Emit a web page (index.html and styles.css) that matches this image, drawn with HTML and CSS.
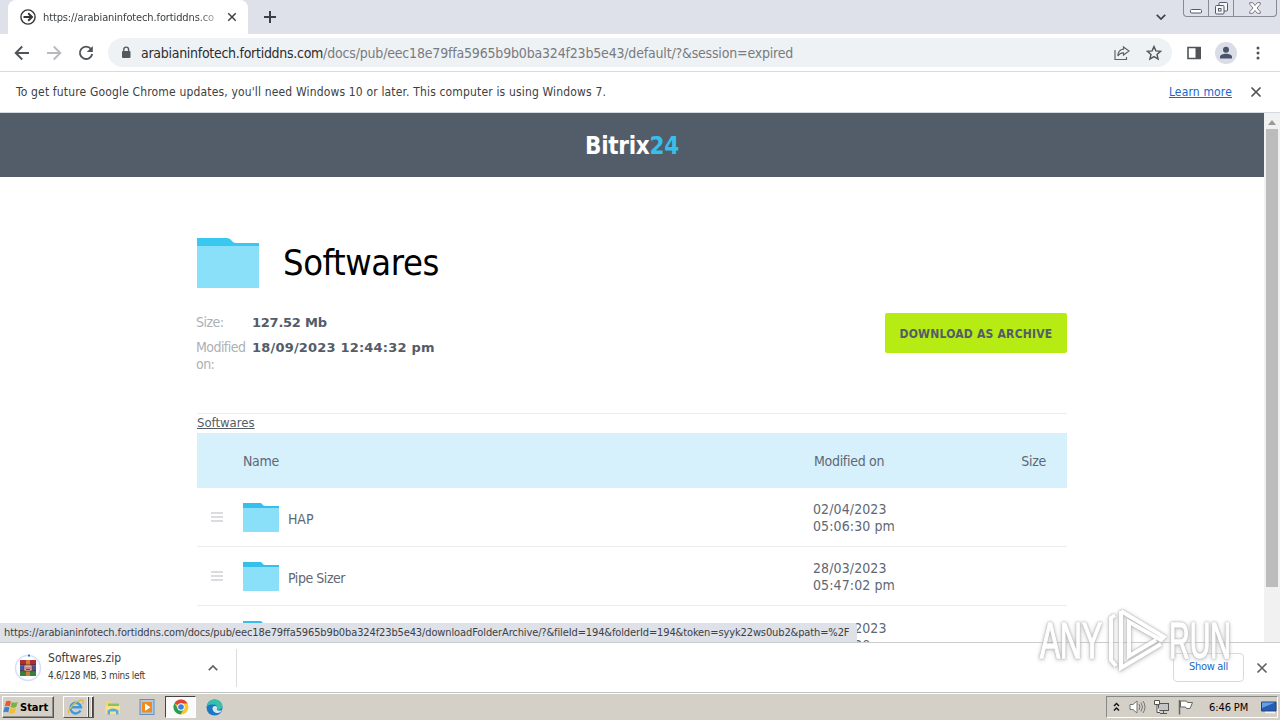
FILE: index.html
```html
<!DOCTYPE html>
<html lang="en">
<head>
  <meta charset="UTF-8">
  <meta name="viewport" content="width=device-width, initial-scale=1.0">
  <title>Softwares - Bitrix24</title>
  <link rel="stylesheet" href="styles.css">
</head>
<body>
  <svg width="0" height="0" class="defs">
    <symbol id="folder" viewBox="0 0 62 50">
      <path d="M0 0h30q3 0 5 3 1 2 4 2h23v5H0z" fill="#3ac8f1"/>
      <path d="M0 8h62v42H0z" fill="#8be0f9"/>
    </symbol>
    <symbol id="folder-small" viewBox="0 0 36 29">
      <path d="M0 0h18l3 3h15v3H0z" fill="#35bfea"/>
      <path d="M0 5h36v24H0z" fill="#8be0f9"/>
    </symbol>
    <symbol id="close" viewBox="0 0 12 12">
      <path d="M1.500 1.500l9 9M10.500 1.500l-9 9" fill="none" stroke="currentColor" stroke-width="1.700"/>
    </symbol>
  </svg>

  <!-- tab strip -->
  <div class="tabstrip">
    <div class="tab">
      <svg class="favicon" width="16" height="16" viewBox="0 0 16 16" fill="none" stroke="#333639"><circle cx="8" cy="8" r="7.100" stroke-width="1.400"/><path d="M3.500 8H12M8.200 4.200L12 8l-3.800 3.800" stroke-width="2"/></svg>
      <span class="tab-title">https://arabianinfotech.fortiddns.co</span>
      <svg class="tab-close" width="10" height="10"><use href="#close"/></svg>
    </div>
    <svg class="new-tab" width="12" height="12" viewBox="0 0 12 12"><path d="M6 0v12M0 6h12" stroke="#3c4043" stroke-width="2"/></svg>
    <svg class="tab-search" width="10" height="6" viewBox="0 0 10 6"><path d="M.8.8L5 5 9.200.8" fill="none" stroke="#3c4043" stroke-width="1.700"/></svg>
    <div class="win-buttons">
      <span><svg width="12" height="14" viewBox="0 0 12 14"><rect x=".5" y="8.500" width="11" height="3.500" rx="1" fill="#fff" stroke="#555b66"/></svg></span>
      <span><svg width="13" height="14" viewBox="0 0 13 14" fill="#f5f6f9" stroke="#555b66"><rect x="4" y="1.500" width="8.500" height="8.500" rx="1"/><rect x=".5" y="4.500" width="8.500" height="8.500" rx="1"/><rect x="3.500" y="7.500" width="2.500" height="2.500"/></svg></span>
      <span><svg width="12" height="12" viewBox="0 0 12 12"><path d="M.7.7h3L6 3.500 8.300.7h3v1.500L8 6l3.300 3.800v1.500h-3L6 8.500l-2.300 2.800h-3V9.800L4 6 .7 2.200z" fill="#fff" stroke="#666c78" stroke-width=".9"/></svg></span>
    </div>
  </div>

  <!-- toolbar -->
  <div class="toolbar">
    <svg class="nav" width="16" height="16" viewBox="0 0 16 16"><path d="M15 8H2M8.200 1.500L1.700 8l6.500 6.500" fill="none" stroke="#505458" stroke-width="1.900"/></svg>
    <svg class="nav" width="16" height="16" viewBox="0 0 16 16"><path d="M1 8h13M7.800 1.500L14.300 8l-6.500 6.500" fill="none" stroke="#b8babd" stroke-width="1.900"/></svg>
    <svg class="nav" width="16" height="16" viewBox="0 0 16 16"><path d="M13 4A6.200 6.200 0 1 0 14.200 9" fill="none" stroke="#505458" stroke-width="1.900"/><path d="M14.800 1v6h-6z" fill="#505458"/></svg>
    <div class="omnibox">
      <svg width="10" height="13" viewBox="0 0 10 13"><rect x="1" y="5" width="8.500" height="7" rx="1" fill="#55595e"/><path d="M2.800 5.500V3.500a2.400 2.400 0 0 1 4.800 0v2" fill="none" stroke="#55595e" stroke-width="1.400"/></svg>
      <span class="url"><b>arabianinfotech.fortiddns.com</b>/docs/pub/eec18e79ffa5965b9b0ba324f23b5e43/default/?&amp;session=expired</span>
      <svg class="share" width="16" height="16" viewBox="0 0 16 16" fill="none" stroke="#5f6368" stroke-width="1.200"><path d="M1 5v9.500h11.500V12"/><path d="M9.500 2l5.500 4-5.500 4V7.800C6.500 7.600 5 9 3.800 11 4 7 6 4.600 9.500 4.200z"/></svg>
      <svg width="16" height="16" viewBox="0 0 16 16"><path d="M8 1.500l1.900 4.400 4.700.4-3.600 3.100 1.100 4.600L8 11.600 3.900 14 5 9.400 1.400 6.300l4.700-.4z" fill="none" stroke="#505458" stroke-width="1.400"/></svg>
    </div>
    <svg class="panel" width="14" height="14" viewBox="0 0 14 14"><path d="M1 1.500h12v11H1z" fill="none" stroke="#505458" stroke-width="1.600"/><path d="M8.500 1H14v12H8.500z" fill="#505458"/></svg>
    <svg class="avatar" width="22" height="22" viewBox="0 0 22 22"><circle cx="11" cy="11" r="11" fill="#dadde5"/><circle cx="11" cy="7.800" r="3" fill="#47546e"/><path d="M5 16.500v-1.700c0-2 3.200-3 6-3s6 1 6 3v1.700z" fill="#47546e"/></svg>
    <svg width="4" height="14" viewBox="0 0 4 14" fill="#505458"><circle cx="2" cy="2" r="1.500"/><circle cx="2" cy="7" r="1.500"/><circle cx="2" cy="12" r="1.500"/></svg>
  </div>

  <div class="infobar">
    <span>To get future Google Chrome updates, you'll need Windows 10 or later. This computer is using Windows 7.</span>
    <a href="#">Learn more</a>
    <svg width="12" height="12"><use href="#close"/></svg>
  </div>

  <!-- page -->
  <div class="viewport">
    <div class="page">
      <header class="header">Bitrix<span>24</span></header>
      <main class="content">
        <div class="title">
          <svg width="62" height="50"><use href="#folder"/></svg>
          <h1>Softwares</h1>
        </div>
        <div class="info">
          <dl>
            <dt>Size:</dt><dd class="size">127.52 Mb</dd>
            <dt>Modified on:</dt><dd>18/09/2023 12:44:32 pm</dd>
          </dl>
          <a class="download" href="#">DOWNLOAD AS ARCHIVE</a>
        </div>
        <div class="crumbs"><a href="#">Softwares</a></div>
        <div class="row head">
          <span></span><span>Name</span><span>Modified on</span><span class="col-size">Size</span>
        </div>
        <div class="row">
          <i class="grip"></i>
          <div class="name"><svg width="36" height="29"><use href="#folder-small"/></svg><span class="hap">HAP</span></div>
          <div class="date">02/04/2023<br>05:06:30 pm</div>
        </div>
        <div class="row">
          <i class="grip"></i>
          <div class="name"><svg width="36" height="29"><use href="#folder-small"/></svg><span>Pipe Sizer</span></div>
          <div class="date">28/03/2023<br>05:47:02 pm</div>
        </div>
        <div class="row last">
          <i class="grip"></i>
          <div class="name"><svg width="36" height="29"><use href="#folder-small"/></svg></div>
          <div class="date">27/03/2023<br>05:43:20 pm</div>
        </div>
      </main>
    </div>
    <div class="scrollbar"><i class="up"></i><i class="thumb"></i></div>
    <div class="status">https://arabianinfotech.fortiddns.com/docs/pub/eec18e79ffa5965b9b0ba324f23b5e43/downloadFolderArchive/?&amp;fileId=194&amp;folderId=194&amp;token=syyk22ws0ub2&amp;path=%2F</div>
  </div>

  <!-- download shelf -->
  <div class="shelf">
    <svg width="28" height="28" viewBox="0 0 28 28">
      <circle cx="14" cy="14" r="12.500" fill="none" stroke="#d3dff6" stroke-width="1.500"/>
      <path d="M14 1.500h2" stroke="#3b78c8" stroke-width="2"/>
      <path d="M6 6h16v5H6z" fill="#b3283a"/><path d="M6 11.500h16v5H6z" fill="#3858a8"/><path d="M6 17h16v5H6z" fill="#35803e"/>
      <path d="M6 11h16M6 16.700h16" stroke="#302b35"/>
      <path d="M12 6h4v16h-4z" fill="#c9803a"/><path d="M10 11h8v6h-8z" fill="#e9ddd3" stroke="#7c3b33"/><path d="M12 12.500v3h4v-3M14 12.500v3" fill="none" stroke="#b3283a"/>
    </svg>
    <div class="file"><div>Softwares.zip</div><small>4.6/128 MB, 3 mins left</small></div>
    <svg class="chevron" width="10" height="6" viewBox="0 0 10 6"><path d="M.8 5.200L5 1l4.200 4.200" fill="none" stroke="#5f6368" stroke-width="1.700"/></svg>
    <a class="show-all" href="#">Show all</a>
    <svg class="shelf-close" width="12" height="12"><use href="#close"/></svg>
  </div>

  <!-- windows taskbar -->
  <div class="taskbar">
    <div class="start">
      <svg width="16" height="16" viewBox="0 0 16 16"><path d="M3 2.500q2.500-1.500 5 0L6.800 7.500q-2.400-1.400-5 0z" fill="#e8592b"/><path d="M8.800 3q2.500 1.300 6 0l-1.600 5q-2.800 1.300-5.600 0z" fill="#7bb342"/><path d="M1.500 8.500q2.600-1.400 5 0l-1.300 5q-2.400-1.400-5 0z" fill="#3c84d0"/><path d="M7.400 9q2.600 1.300 5.500 0l-1.400 5q-2.700 1.300-5.400 0z" fill="#f4bf2c"/></svg>
      <span>Start</span>
    </div>
    <div class="ie"><svg width="18" height="18" viewBox="0 0 18 18"><path d="M13.500 12.500A5.300 5.300 0 1 1 14 9.300H5" fill="none" stroke="#3c9be0" stroke-width="2.400"/><path d="M2 15.500C-1 13 8 3 14.500 2c2.500-.2 2 2.500.8 4" fill="none" stroke="#e6b93c" stroke-width="1.300"/></svg><i></i><i></i></div>
    <svg class="task" width="18" height="18" viewBox="0 0 18 18"><path d="M2 3h5l1 2h7v10H2z" fill="#f0d683"/><path d="M4 5.500h11v2.500H4z" fill="#8ebf62"/><path d="M1.500 8h14.500v8H1.500z" fill="#f7e28c"/><path d="M3.500 16.500v-4q5.500-4 11 0v4H12v-3H6v3z" fill="#5caade"/></svg>
    <svg class="task" width="18" height="18" viewBox="0 0 18 18"><rect x="2" y="1.500" width="14" height="15" fill="#a7cbea" stroke="#5d91c6"/><rect x="4" y="4" width="10" height="10.500" fill="#f18a1c"/><path d="M7 5.500l5.500 3.700L7 13z" fill="#fff"/></svg>
    <div class="active"><svg width="16" height="16" viewBox="0 0 16 16"><circle cx="8" cy="8" r="7.500" fill="#f9c72e"/><path d="M8 8L1.500 4.200A7.500 7.500 0 0 1 14.500 4.500H8z" fill="#dc4437"/><path d="M1.500 4.200A7.500 7.500 0 0 0 7.500 15.500L11 9.800 8 8 5 9.800z" fill="#2a9c55"/><circle cx="8" cy="8" r="3.700" fill="#fff"/><circle cx="8" cy="8" r="2.800" fill="#3f7de0"/></svg></div>
    <svg class="edge" width="17" height="17" viewBox="0 0 17 17"><circle cx="8.500" cy="8.500" r="8" fill="#1b76c6"/><path d="M.6 8C1.500 2.500 5 .5 8.500.5c5 0 8 3.500 8 6.500 0 3-3 4.300-5.500 3.500 1-3-1-5-4-5C4 5.500 1.500 6 .6 8z" fill="#38bfa8"/><path d="M6.500 9c.2-2 3-3 4.500-1 .4 1 0 2-.3 2.500 1 1.500 4 1.500 5.300.5-1 2.500-3.500 3-5 3-2.500 0-4.700-2.500-4.500-5z" fill="#d4e8ef"/></svg>
    <div class="tray">
      <svg width="7" height="10" viewBox="0 0 7 10"><path d="M1 4l2.500-2.500L6 4M1 8.500L3.500 6 6 8.500" fill="none" stroke="#111" stroke-width="1.400"/></svg>
      <svg class="vol" width="17" height="16" viewBox="0 0 17 16" fill="#fff" stroke="#777"><path d="M1 5.500h3L8 2v12L4 10.500H1z"/><path d="M10 5q2 3 0 6M12 3.500q3 4.500 0 9M14 2q4 6 0 12" fill="none"/></svg>
      <svg class="net" width="17" height="16" viewBox="0 0 17 16" fill="#c4c4c4" stroke="#555"><rect x="5.500" y="4.500" width="10" height="7"/><path d="M7 14.500h7M10.500 12v2" fill="none"/><path d="M1.500 1.500h5v4h-5zM4 5.500v8h3" fill="#fff"/></svg>
      <svg class="flag" width="17" height="16" viewBox="0 0 17 16" fill="#fff" stroke="#666"><path d="M2.500 1v14.500" stroke-width="1.500"/><path d="M3.500 2h6l1 1.500h5L13 9.500H9.500L8.500 8h-5z"/></svg>
      <span class="clock">6:46 PM</span>
      <svg class="desk" width="16" height="14" viewBox="0 0 16 14"><path d="M.5 2h14.500v9H.5z" fill="#265db4" stroke="#244475"/><path d="M1 2.500h13L1 8z" fill="#65a0e5"/><path d="M4 12.500h10" stroke="#f4f4f4" stroke-width="1.500"/></svg>
    </div>
  </div>

  <svg class="watermark" width="204" height="72" viewBox="0 0 204 72">
    <text x="5" y="55" textLength="62" lengthAdjust="spacingAndGlyphs">ANY</text>
    <text x="134" y="55" textLength="62" lengthAdjust="spacingAndGlyphs">RUN</text>
    <path d="M80 12l-4 3v42l5 6M86 8v57l40-24M86 8l43 26-3 3-32-18v34l27-16"/>
  </svg>
</body>
</html>
```
FILE: styles.css
```css
* {
  box-sizing: border-box;
  margin: 0;
  padding: 0;
}

body {
  width: 1280px;
  height: 720px;
  overflow: hidden;
  display: flex;
  flex-direction: column;
  font-family: "DejaVu Sans Condensed", Tahoma, sans-serif;
  font-size: 12px;
  color: #3c4043;
  background: #fff;
}

svg {
  display: block;
  flex: none;
}

.defs {
  position: absolute;
}

/* tab strip */
.tabstrip {
  height: 34px;
  flex: none;
  display: flex;
  background: #dee1e9;
}

.tab {
  width: 240px;
  margin-left: 8px;
  padding: 0 11px 0 12px;
  display: flex;
  align-items: center;
  background: #fff;
  border-radius: 8px 8px 0 0;
}

.tab-title {
  width: 176px;
  margin-left: 7px;
  overflow: hidden;
  white-space: nowrap;
  font-size: 11px;
  letter-spacing: -0.12px;
  mask-image: linear-gradient(to right, #000 155px, transparent 182px);
}

.tab-close {
  margin-left: auto;
}

.new-tab {
  margin: 11px 0 0 16px;
}

.tab-search {
  margin: 14px 17px 0 auto;
}

.win-buttons {
  display: flex;
  width: 94px;
  height: 17px;
  margin-right: 3px;
  border: 1px solid #868b97;
  border-top: 0;
  border-radius: 0 0 4px 4px;
}

.win-buttons span {
  width: 25px;
  display: flex;
  justify-content: center;
  align-items: center;
  border-right: 1px solid #868b97;
}

.win-buttons span:last-child {
  flex: 1;
  border: 0;
}

/* toolbar */
.toolbar {
  height: 38px;
  flex: none;
  display: flex;
  align-items: center;
  padding: 0 20px 0 14px;
  border-bottom: 1px solid #d8dadc;
}

.nav {
  margin-right: 16px;
}

.omnibox {
  width: 1064px;
  height: 29px;
  margin-left: -2px;
  padding: 0 10px 0 13px;
  display: flex;
  align-items: center;
  border-radius: 15px;
  background: #eff2f5;
}

.url {
  margin-left: 10px;
  font-size: 14px;
  letter-spacing: -0.18px;
  color: #777b80;
}

.url b {
  font-weight: normal;
  letter-spacing: -0.28px;
  color: #2b2d30;
}

.share {
  margin: 0 16px 0 auto;
}

.panel {
  margin: 0 14px 0 15px;
}

.avatar {
  margin-right: 19px;
}

.infobar {
  height: 41px;
  flex: none;
  display: flex;
  align-items: center;
  padding: 0 18px 1px 16px;
  border-bottom: 1px solid #d5dae2;
  letter-spacing: 0.16px;
}

.infobar a {
  margin: 0 18px 0 auto;
  color: #1a67c9;
}

.infobar svg {
  color: #505458;
}

/* page */
.viewport {
  position: relative;
  height: 529px;
  flex: none;
  display: flex;
  overflow: hidden;
}

.page {
  width: 1264px;
}

.header {
  height: 64px;
  background: #535c69;
  color: #fff;
  font-size: 24px;
  font-weight: bold;
  line-height: 66px;
  letter-spacing: -0.3px;
  text-align: center;
}

.header span {
  color: #35bfe9;
}

.content {
  width: 870px;
  margin: 0 auto;
  color: #606875;
}

.title {
  display: flex;
  padding-top: 61px;
}

.title h1 {
  margin-left: 24px;
  font-size: 36px;
  font-weight: normal;
  line-height: 50px;
  letter-spacing: -0.4px;
  color: #000;
}

.info {
  display: flex;
  justify-content: space-between;
  height: 126px;
  padding-top: 25px;
  border-bottom: 1px solid #ececee;
}

.info dl {
  display: grid;
  grid-template-columns: 56px 220px;
  align-content: start;
  row-gap: 8px;
  margin: 1px 0 0 -1px;
  font-size: 14px;
  line-height: 17px;
}

.info dt {
  color: #adb0b5;
  letter-spacing: -0.55px;
}

.info dd {
  font-family: "DejaVu Sans", Verdana, sans-serif;
  font-size: 13px;
  font-weight: bold;
  letter-spacing: 0.19px;
  color: #535c69;
}

.info .size {
  letter-spacing: -0.25px;
}

.download {
  width: 182px;
  height: 40px;
  border-radius: 2px;
  background: #b6eb14;
  color: #535c69;
  font-size: 12px;
  font-weight: bold;
  line-height: 42px;
  letter-spacing: 0.22px;
  text-align: center;
  text-decoration: none;
}

.crumbs {
  height: 19px;
  font-size: 13px;
  line-height: 18px;
}

.crumbs a {
  color: #535c69;
}

.row {
  height: 59px;
  display: grid;
  grid-template-columns: 46px 571px 180px 1fr;
  align-items: center;
  border-bottom: 1px solid #ececee;
  font-size: 14px;
  line-height: 17px;
}

.row.head {
  height: 55px;
  padding-top: 2px;
  border: 0;
  background: #d6f0fc;
  letter-spacing: -0.3px;
}

.col-size {
  padding-right: 21px;
  text-align: right;
}

.grip {
  width: 12px;
  height: 10px;
  margin-left: 14px;
  border: solid #dadcdf;
  border-width: 2px 0;
  background: linear-gradient(#dadcdf, #dadcdf) 0 2px / 12px 2px no-repeat;
}

.name {
  display: flex;
  align-items: center;
  letter-spacing: -0.45px;
}

.name span {
  margin: 4px 0 0 9px;
}

.name .hap {
  letter-spacing: -0.1px;
}

.date {
  margin-left: -1px;
  padding-top: 1px;
  letter-spacing: 0.1px;
}

.last .date {
  padding-top: 3px;
}

.scrollbar {
  width: 16px;
  padding: 0 2px;
  background: #f1f1f1;
}

.up {
  display: block;
  width: 0;
  margin: 7px 0 4px 2px;
  border: 4px solid transparent;
  border-top: 0;
  border-bottom: 5px solid #999;
}

.thumb {
  display: block;
  height: 458px;
  background: #bcbcbc;
}

.status {
  position: absolute;
  left: 0;
  bottom: 0;
  width: 857px;
  height: 19px;
  padding-left: 4px;
  background: #dee1e8;
  border-top-right-radius: 3px;
  font-size: 11px;
  line-height: 20px;
  letter-spacing: -0.12px;
  white-space: nowrap;
}

/* download shelf */
.shelf {
  height: 50px;
  flex: none;
  display: flex;
  align-items: center;
  padding: 0 12px 0 14px;
  border-top: 1px solid #c9cbcf;
}

.file {
  width: 158px;
  margin: -1px 0 0 6px;
  line-height: 17px;
  letter-spacing: 0.08px;
}

.file small {
  display: block;
  font-size: 10px;
  letter-spacing: -0.33px;
}

.chevron {
  box-sizing: content-box;
  margin-left: 2px;
  padding: 16px 18px 16px 0;
  border-right: 1px solid #dadce0;
}

.show-all {
  width: 71px;
  height: 29px;
  margin-left: auto;
  border: 1px solid #d8dadd;
  border-radius: 4px;
  color: #1a67c9;
  font-size: 11px;
  line-height: 26px;
  letter-spacing: -0.3px;
  text-align: center;
  text-decoration: none;
}

.shelf-close {
  margin-left: 12px;
  color: #5f6368;
}

/* taskbar */
.taskbar {
  height: 28px;
  flex: none;
  display: flex;
  align-items: center;
  padding: 1px 2px 0;
  background: #d4cfc7;
  border-top: 1px solid #bfc4c4;
  box-shadow: inset 0 1px #fff;
}

.start {
  width: 52px;
  height: 22px;
  display: flex;
  align-items: center;
  border: 1px solid;
  border-color: #fff #555 #555 #fff;
  box-shadow: inset -1px -1px #918d87;
  color: #000;
  font-size: 11px;
  font-weight: bold;
}

.start span {
  margin-left: 1px;
}

.ie {
  height: 22px;
  margin-left: 9px;
  padding-left: 3px;
  display: flex;
  align-items: center;
  border: 1px solid;
  border-color: #fff #555 #555 #fff;
}

.ie i {
  width: 4px;
  height: 20px;
  border-right: 1px solid #444;
  box-shadow: inset -1px 0 #eee;
}

.task {
  margin-left: 10px;
}

.task + .task {
  margin-left: 16px;
}

.active {
  width: 31px;
  height: 22px;
  margin-left: 9px;
  display: flex;
  align-items: center;
  justify-content: center;
  border: 1px solid;
  border-color: #444 #fff #fff #444;
  background: #fafafa;
}

.edge {
  margin-left: 10px;
}

.tray {
  width: 172px;
  height: 22px;
  margin-left: auto;
  padding-left: 6px;
  display: flex;
  align-items: center;
  border: 1px solid;
  border-color: #888 #fff #fff #888;
  color: #000;
  font-size: 11px;
}

.vol {
  margin-left: 9px;
}

.net {
  margin-left: 7px;
}

.flag {
  margin-left: 7px;
}

.clock {
  margin-left: 15px;
  letter-spacing: -0.1px;
  white-space: nowrap;
}

.desk {
  margin-left: auto;
}

.watermark {
  position: absolute;
  left: 1035px;
  top: 603px;
  overflow: visible;
  fill: none;
  stroke: #fff;
  stroke-width: 4px;
  opacity: 0.85;
  filter: drop-shadow(0 0 1px #999) drop-shadow(0 1px 2px #c4c4c4);
  font-family: "Liberation Sans", sans-serif;
  font-size: 50px;
}

.watermark text {
  fill: #fff;
  stroke-width: 1.5px;
}
```
